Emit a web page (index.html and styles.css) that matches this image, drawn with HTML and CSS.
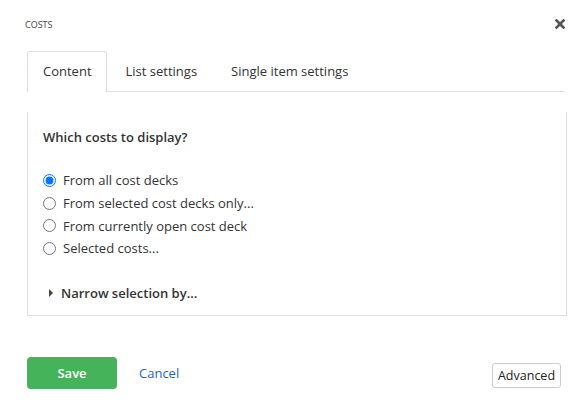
FILE: index.html
```html
<!DOCTYPE html>
<html>
<head>
<meta charset="utf-8">
<link rel="stylesheet" href="styles.css">
</head>
<body>
<div class="dialog">
  <div class="header">
    <span class="title">COSTS</span>
    <span class="close" aria-label="Close">
      <svg width="10" height="10" viewBox="0 0 10 10"><path d="M1.5 1.5 L8.5 8.5 M8.5 1.5 L1.5 8.5" stroke="#555" stroke-width="2.6" stroke-linecap="square"/></svg>
    </span>
  </div>
  <div class="tabs">
    <div class="tab active">Content</div>
    <div class="tab">List settings</div>
    <div class="tab">Single item settings</div>
  </div>
  <div class="panel">
    <div class="question">Which costs to display?</div>
    <div class="options">
      <label class="option"><input type="radio" name="src" checked><span>From all cost decks</span></label>
      <label class="option"><input type="radio" name="src"><span>From selected cost decks only...</span></label>
      <label class="option"><input type="radio" name="src"><span>From currently open cost deck</span></label>
      <label class="option"><input type="radio" name="src"><span>Selected costs...</span></label>
    </div>
    <div class="narrow"><span class="caret"></span>Narrow selection by...</div>
  </div>
  <div class="footer">
    <button class="save">Save</button>
    <a class="cancel">Cancel</a>
    <button class="advanced">Advanced</button>
  </div>
</div>
</body>
</html>
```
FILE: styles.css
```css
html, body {
  margin: 0;
  padding: 0;
  background: #fff;
}
body {
  font-family: "Open Sans", "Liberation Sans", sans-serif;
  color: #333;
}
.dialog {
  width: 587px;
  height: 404px;
  box-sizing: border-box;
  padding: 0 22px 0 27px;
}
.header {
  display: flex;
  justify-content: space-between;
  align-items: center;
  height: 20px;
  padding-top: 14px;
  margin-left: -2px;
}
.title {
  font-size: 9px;
  color: #444;
}
.close {
  display: flex;
}
.tabs {
  display: flex;
  margin-top: 17px;
  border-bottom: 1px solid #ddd;
}
.tab {
  height: 39px;
  line-height: 39px;
  padding: 0 14px 0 15px;
  margin-right: 3px;
  margin-bottom: -1px;
  font-size: 13px;
  color: #333;
  border: 1px solid transparent;
  border-bottom: none;
  border-radius: 3px 3px 0 0;
}
.tab.active {
  border-color: #ddd;
  background: #fff;
  height: 40px;
}
.panel {
  margin-top: 20px;
  border: 1px solid #ddd;
  border-top: none;
  padding: 15px 15px 12px 15px;
  width: 508px;
}
.question {
  font-size: 13px;
  font-weight: 600;
  line-height: 20px;
  color: #333;
}
.options {
  margin-top: 22px;
  display: flex;
  flex-direction: column;
}
.option {
  display: flex;
  align-items: center;
  height: 22.7px;
  font-size: 13px;
  color: #333;
}
.option input {
  margin: 0 7px 0 0;
  width: 13px;
  height: 13px;
}
.narrow {
  margin-top: 23px;
  display: flex;
  align-items: center;
  font-size: 13px;
  font-weight: 600;
  line-height: 20px;
  padding-left: 6px;
}
.caret {
  width: 0;
  height: 0;
  border-top: 4px solid transparent;
  border-bottom: 4px solid transparent;
  border-left: 4px solid #444;
  margin-right: 8px;
}
.footer {
  display: flex;
  align-items: flex-start;
  margin-top: 41px;
  width: 534px;
}
.save {
  width: 90px;
  height: 32px;
  background: #44b35a;
  color: #fff;
  border: none;
  border-radius: 4px;
  font-family: inherit;
  font-size: 13px;
  font-weight: 600;
}
.cancel {
  margin-left: 22px;
  line-height: 32px;
  font-size: 13px;
  color: #1f5fbf;
}
.advanced {
  margin-left: auto;
  margin-top: 6px;
  height: 25px;
  width: 69px;
  padding: 0;
  background: #fff;
  border: 1px solid #ccc;
  border-radius: 3px;
  font-family: inherit;
  font-size: 12.5px;
  color: #222;
}
```
